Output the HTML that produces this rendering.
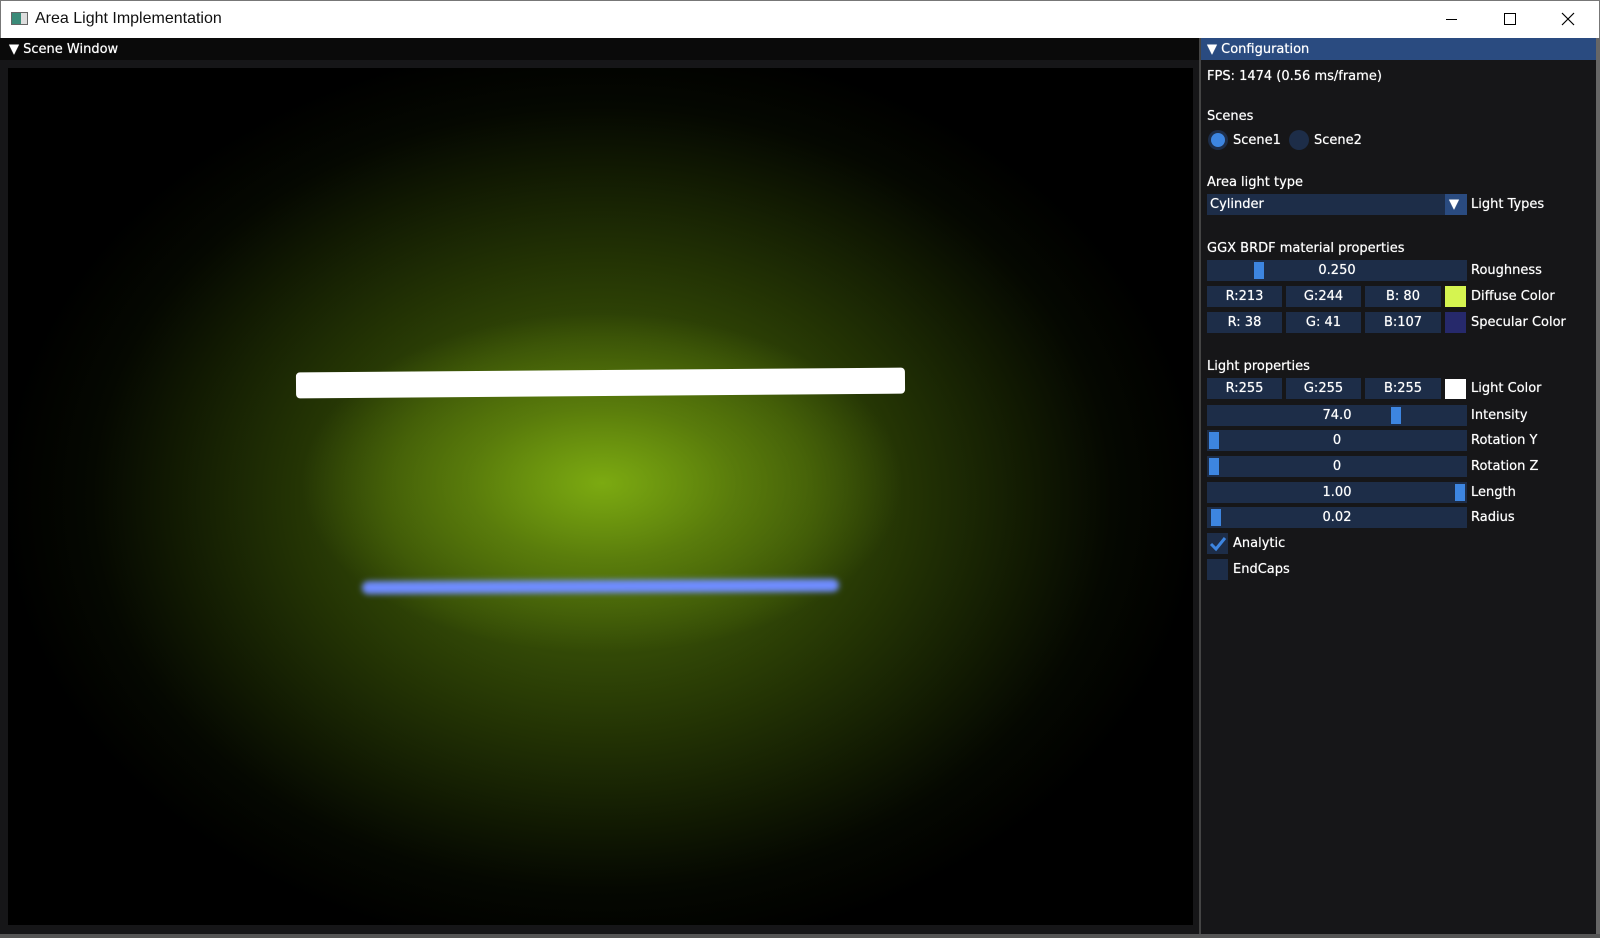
<!DOCTYPE html><html><head><style>
*{margin:0;padding:0;box-sizing:border-box}
body{width:1600px;height:938px;overflow:hidden;background:#fff;font-family:"DejaVu Sans","Liberation Sans",sans-serif;position:relative}
.a{position:absolute}
.t{font-size:13px;color:#fff;white-space:nowrap;line-height:23px;text-shadow:0 0 0.6px #fff}
.f{background:#1d2d48}
.c{text-align:center}
.g{background:#3d85e0}
</style></head><body>
<div class="a" style="left:0;top:0;width:1600px;height:38px;background:#fff;border:1px solid #777;border-bottom:none"></div>
<div class="a" style="left:11px;top:12px;width:17px;height:13px;border:1px solid #666;background:linear-gradient(90deg,#3a8a78 60%,#ddd 60%)"></div>
<div class="a" style="left:35px;top:10px;font:16px 'Liberation Sans',sans-serif;color:#111">Area Light Implementation</div>
<div class="a" style="left:1446px;top:19px;width:11px;height:1px;background:#000"></div>
<div class="a" style="left:1504px;top:13px;width:12px;height:12px;border:1px solid #000"></div>
<svg class="a" style="left:1561px;top:12px" width="14" height="14"><path d="M1 1L13 13M13 1L1 13" stroke="#000" stroke-width="1.2"/></svg>
<div class="a" style="left:0;top:38px;width:1600px;height:900px;background:#161618"></div>
<div class="a" style="left:0;top:38px;width:1199px;height:22px;background:#0a0a0a"></div>
<div class="a t" style="left:9px;top:38px">▼ Scene Window</div>
<div class="a" style="left:8px;top:68px;width:1185px;height:857px;background:radial-gradient(ellipse 300px 170px at 594px 415px,rgba(130,178,18,0.9) 0%,rgba(110,150,14,0.6) 45%,rgba(0,0,0,0) 100%),radial-gradient(ellipse 600px 460px at 594px 430px,#44620a 0%,#324806 35%,#172203 65%,#050801 85%,#000 100%);overflow:hidden">
<div class="a" style="left:288px;top:302px;width:609px;height:26px;background:#fff;border-radius:4px;transform:rotate(-0.45deg)"></div>
<div class="a" style="left:354px;top:512px;width:477px;height:13px;background:#6f8cff;border-radius:7px;filter:blur(3px);transform:rotate(-0.3deg)"></div>
</div>
<div class="a" style="left:1199px;top:38px;width:2px;height:900px;background:#444"></div>
<div class="a" style="left:1596px;top:38px;width:4px;height:900px;background:#666"></div>
<div class="a" style="left:0;top:934px;width:1600px;height:4px;background:#555"></div>
<div class="a" style="left:1201px;top:38px;width:395px;height:22px;background:#2a4b80"></div>
<div class="a t" style="left:1207px;top:38px">▼ Configuration</div>
<div class="a t" style="left:1207px;top:65px">FPS: 1474 (0.56 ms/frame)</div>
<div class="a t" style="left:1207px;top:105px">Scenes</div>
<div class="a" style="left:1208px;top:130px;width:20px;height:20px;border-radius:50%;background:#1d2d48"></div>
<div class="a g" style="left:1211px;top:133px;width:14px;height:14px;border-radius:50%"></div>
<div class="a t" style="left:1233px;top:129px">Scene1</div>
<div class="a f" style="left:1289px;top:130px;width:20px;height:20px;border-radius:50%"></div>
<div class="a t" style="left:1314px;top:129px">Scene2</div>
<div class="a t" style="left:1207px;top:171px">Area light type</div>
<div class="a f" style="left:1207px;top:194px;width:260px;height:21px"></div>
<div class="a t" style="left:1210px;top:193px">Cylinder</div>
<div class="a" style="left:1445px;top:194px;width:22px;height:21px;background:#2a4b80"></div>
<div class="a t" style="left:1449px;top:193px">▼</div>
<div class="a t" style="left:1471px;top:193px">Light Types</div>
<div class="a t" style="left:1207px;top:237px">GGX BRDF material properties</div>
<div class="a f" style="left:1207px;top:260px;width:260px;height:21px"></div>
<div class="a g" style="left:1254px;top:262px;width:10px;height:17px"></div>
<div class="a t c" style="left:1207px;top:259px;width:260px">0.250</div>
<div class="a t" style="left:1471px;top:259px">Roughness</div>
<div class="a f t c" style="left:1207px;top:286px;width:75px;height:21px;line-height:21px">R:213</div>
<div class="a f t c" style="left:1286px;top:286px;width:75px;height:21px;line-height:21px">G:244</div>
<div class="a f t c" style="left:1365px;top:286px;width:76px;height:21px;line-height:21px">B: 80</div>
<div class="a" style="left:1445px;top:286px;width:21px;height:21px;background:#d5f450"></div>
<div class="a t" style="left:1471px;top:285px">Diffuse Color</div>
<div class="a f t c" style="left:1207px;top:312px;width:75px;height:21px;line-height:21px">R: 38</div>
<div class="a f t c" style="left:1286px;top:312px;width:75px;height:21px;line-height:21px">G: 41</div>
<div class="a f t c" style="left:1365px;top:312px;width:76px;height:21px;line-height:21px">B:107</div>
<div class="a" style="left:1445px;top:312px;width:21px;height:21px;background:#26296b"></div>
<div class="a t" style="left:1471px;top:311px">Specular Color</div>
<div class="a t" style="left:1207px;top:355px">Light properties</div>
<div class="a f t c" style="left:1207px;top:378px;width:75px;height:21px;line-height:21px">R:255</div>
<div class="a f t c" style="left:1286px;top:378px;width:75px;height:21px;line-height:21px">G:255</div>
<div class="a f t c" style="left:1365px;top:378px;width:76px;height:21px;line-height:21px">B:255</div>
<div class="a" style="left:1445px;top:379px;width:21px;height:20px;background:#fff"></div>
<div class="a t" style="left:1471px;top:377px">Light Color</div>
<div class="a f" style="left:1207px;top:405px;width:260px;height:21px"></div><div class="a g" style="left:1391px;top:407px;width:10px;height:17px"></div><div class="a t c" style="left:1207px;top:404px;width:260px">74.0</div><div class="a t" style="left:1471px;top:404px">Intensity</div>
<div class="a f" style="left:1207px;top:430px;width:260px;height:21px"></div><div class="a g" style="left:1209px;top:432px;width:10px;height:17px"></div><div class="a t c" style="left:1207px;top:429px;width:260px">0</div><div class="a t" style="left:1471px;top:429px">Rotation Y</div>
<div class="a f" style="left:1207px;top:456px;width:260px;height:21px"></div><div class="a g" style="left:1209px;top:458px;width:10px;height:17px"></div><div class="a t c" style="left:1207px;top:455px;width:260px">0</div><div class="a t" style="left:1471px;top:455px">Rotation Z</div>
<div class="a f" style="left:1207px;top:482px;width:260px;height:21px"></div><div class="a g" style="left:1455px;top:484px;width:10px;height:17px"></div><div class="a t c" style="left:1207px;top:481px;width:260px">1.00</div><div class="a t" style="left:1471px;top:481px">Length</div>
<div class="a f" style="left:1207px;top:507px;width:260px;height:21px"></div><div class="a g" style="left:1211px;top:509px;width:10px;height:17px"></div><div class="a t c" style="left:1207px;top:506px;width:260px">0.02</div><div class="a t" style="left:1471px;top:506px">Radius</div>
<div class="a f" style="left:1207px;top:533px;width:21px;height:21px"></div>
<svg class="a" style="left:1207px;top:533px" width="21" height="21"><path d="M4 11L9 16L18 5" stroke="#3d85e0" stroke-width="3" fill="none"/></svg>
<div class="a t" style="left:1233px;top:532px">Analytic</div>
<div class="a f" style="left:1207px;top:559px;width:21px;height:21px"></div>
<div class="a t" style="left:1233px;top:558px">EndCaps</div>
</body></html>
